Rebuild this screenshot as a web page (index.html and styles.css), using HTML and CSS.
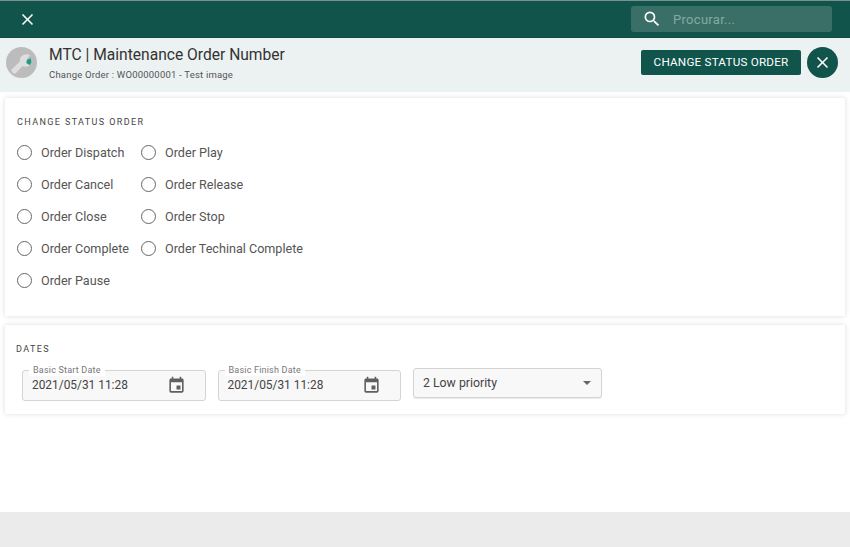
FILE: index.html
```html
<!DOCTYPE html>
<html lang="en">
<head>
  <meta charset="UTF-8">
  <meta name="viewport" content="width=device-width, initial-scale=1.0">
  <title>Maintenance Order Number</title>
  <link rel="stylesheet" href="styles.css">
</head>
<body>
  <div class="topbar">
    <button class="topbar-close" aria-label="Close">
      <svg viewBox="0 0 24 24" width="19" height="19"><path d="M19 6.41 17.59 5 12 10.59 6.41 5 5 6.41 10.59 12 5 17.59 6.41 19 12 13.41 17.59 19 19 17.59 13.41 12z"/></svg>
    </button>
    <div class="search">
      <svg viewBox="0 0 24 24" width="20" height="20"><path d="M15.5 14h-.79l-.28-.27A6.47 6.47 0 0 0 16 9.5 6.5 6.5 0 1 0 9.5 16c1.61 0 3.09-.59 4.23-1.57l.27.28v.79l5 4.99L20.49 19l-4.99-5zm-6 0C7.01 14 5 11.99 5 9.5S7.01 5 9.5 5 14 7.01 14 9.5 11.99 14 9.5 14z"/></svg>
      <span class="search-text">Procurar...</span>
    </div>
  </div>

  <div class="page-header">
    <div class="avatar">
      <svg viewBox="0 0 30 30" width="31" height="31">
        <path class="wrench" d="M5.5 21.5 13.5 14C13 9.5 16.5 6.5 21 7L23 8 20 12 19.5 15.5 23 18C20.5 19.5 18 19.5 16 18.5L9.5 25.5C7.5 26.5 4.5 24 5.5 21.5Z"/>
        <path class="wrench-tip" d="M20.3 12.5 24 11 24.5 15 23 17.5 19.8 15.5Z"/>
      </svg>
    </div>
    <div class="page-title">
      <h1>MTC | Maintenance Order Number</h1>
      <p>Change Order : WO00000001 - Test image</p>
    </div>
    <button class="btn-status">CHANGE STATUS ORDER</button>
    <button class="btn-close" aria-label="Close">
      <svg viewBox="0 0 24 24" width="19" height="19"><path d="M19 6.41 17.59 5 12 10.59 6.41 5 5 6.41 10.59 12 5 17.59 6.41 19 12 13.41 17.59 19 19 17.59 13.41 12z"/></svg>
    </button>
  </div>

  <div class="content">
    <section class="card card-status">
      <h2>CHANGE STATUS ORDER</h2>
      <div class="radio-columns">
        <div class="radio-col">
          <label class="radio"><span class="radio-dot"></span>Order Dispatch</label>
          <label class="radio"><span class="radio-dot"></span>Order Cancel</label>
          <label class="radio"><span class="radio-dot"></span>Order Close</label>
          <label class="radio"><span class="radio-dot"></span>Order Complete</label>
          <label class="radio"><span class="radio-dot"></span>Order Pause</label>
        </div>
        <div class="radio-col">
          <label class="radio"><span class="radio-dot"></span>Order Play</label>
          <label class="radio"><span class="radio-dot"></span>Order Release</label>
          <label class="radio"><span class="radio-dot"></span>Order Stop</label>
          <label class="radio"><span class="radio-dot"></span>Order Techinal Complete</label>
        </div>
      </div>
    </section>

    <section class="card card-dates">
      <h2>DATES</h2>
      <div class="date-row">
        <div class="field">
          <span class="field-label">Basic Start Date</span>
          <span class="field-value date-value">2021/05/31 11:28</span>
          <svg class="field-icon" viewBox="0 0 24 24" width="19" height="19"><path d="M17 12h-5v5h5v-5zM16 1v2H8V1H6v2H5c-1.11 0-1.99.9-1.99 2L3 19a2 2 0 0 0 2 2h14c1.1 0 2-.9 2-2V5c0-1.1-.9-2-2-2h-1V1h-2zm3 18H5V8h14v11z"/></svg>
        </div>
        <div class="field">
          <span class="field-label">Basic Finish Date</span>
          <span class="field-value date-value">2021/05/31 11:28</span>
          <svg class="field-icon" viewBox="0 0 24 24" width="19" height="19"><path d="M17 12h-5v5h5v-5zM16 1v2H8V1H6v2H5c-1.11 0-1.99.9-1.99 2L3 19a2 2 0 0 0 2 2h14c1.1 0 2-.9 2-2V5c0-1.1-.9-2-2-2h-1V1h-2zm3 18H5V8h14v11z"/></svg>
        </div>
        <div class="select">
          <span class="field-value select-value">2 Low priority</span>
          <span class="select-arrow"></span>
        </div>
      </div>
    </section>
  </div>

  <div class="footer"></div>
</body>
</html>
```

FILE: styles.css
```css
* {
  box-sizing: border-box;
}

body {
  font-family: Roboto, "Liberation Sans", Arial, sans-serif;
  background-color: #fff;
  color: #444;
  display: flex;
  flex-direction: column;
  height: 547px;
  margin: 0;
  overflow: hidden;
}

button {
  font-family: inherit;
  border: none;
  padding: 0;
  cursor: pointer;
}

/* Top bar */
.topbar {
  display: flex;
  justify-content: space-between;
  align-items: center;
  height: 38px;
  flex-shrink: 0;
  background-color: #11544c;
  border-top: 1px solid #7d8f8c;
  border-bottom: 1px solid #0f4a43;
  padding: 0 18px 0 18px;
}

.topbar-close {
  display: flex;
  background: transparent;
  fill: #fff;
}

.search {
  display: flex;
  align-items: center;
  width: 201px;
  height: 26px;
  background-color: #3a6f67;
  border-radius: 3px;
  padding-left: 11px;
  fill: #fff;
}

.search-text {
  margin-left: 11px;
  font-size: 13px;
  letter-spacing: 0.3px;
  color: #86a8a2;
}

/* Page header */
.page-header {
  display: flex;
  align-items: center;
  height: 54px;
  flex-shrink: 0;
  background-color: #ecf1f2;
  padding: 0 12px 6px 6px;
}

.avatar {
  display: flex;
  width: 31px;
  height: 31px;
  border-radius: 50%;
  background-color: #bcbcbc;
  overflow: hidden;
}

.wrench {
  fill: #dedede;
}

.wrench-tip {
  fill: #12a183;
}

.page-title {
  flex-grow: 1;
  margin: 2px 0 0 12px;
}

.page-title h1 {
  margin: 0;
  font-size: 15.6px;
  font-weight: 400;
  line-height: 20px;
  color: #333;
}

.page-title p {
  margin: 4px 0 0;
  font-size: 9.5px;
  line-height: 12px;
  letter-spacing: 0.2px;
  color: #555;
}

.btn-status {
  width: 160px;
  height: 25px;
  background-color: #11544c;
  color: #fff;
  border-radius: 2px;
  font-size: 11.7px;
  letter-spacing: 0.2px;
}

.btn-close {
  display: flex;
  justify-content: center;
  align-items: center;
  width: 31px;
  height: 31px;
  margin-left: 6px;
  border-radius: 50%;
  background-color: #11544c;
  fill: #fff;
}

/* Cards */
.content {
  flex-grow: 1;
  display: flex;
  flex-direction: column;
  gap: 9px;
  padding: 6px 5px 0;
}

.card {
  background-color: #fff;
  box-shadow: 0 0 5px rgba(0, 0, 0, 0.14);
}

.card h2 {
  margin: 0;
  font-size: 9px;
  font-weight: 400;
  line-height: 12px;
  letter-spacing: 1.4px;
  color: #444;
}

.card-status {
  height: 218px;
  padding: 18px 12px 0;
}

.radio-columns {
  display: flex;
  gap: 12px;
  margin-top: 8px;
}

.radio {
  display: flex;
  align-items: center;
  height: 32px;
  font-size: 12.6px;
  color: #555;
}

.radio-dot {
  width: 15px;
  height: 15px;
  margin-right: 9px;
  border: 1.5px solid #666;
  border-radius: 50%;
}

.card-dates {
  height: 89px;
  padding: 18px 11px 0;
}

.date-row {
  display: flex;
  align-items: flex-start;
  gap: 12px;
  margin-top: 13px;
  padding-left: 6px;
}

.field {
  position: relative;
  display: flex;
  justify-content: space-between;
  align-items: center;
  width: 183.5px;
  height: 31px;
  margin-top: 1.5px;
  padding: 0 19px 0 9px;
  background-color: #f8f8f8;
  border: 1px solid #d4d4d4;
  border-radius: 3px;
}

.field-label {
  position: absolute;
  top: -6px;
  left: 6px;
  padding: 0 4px;
  background-color: #fff;
  font-size: 9px;
  line-height: 11px;
  letter-spacing: 0.2px;
  color: #777;
}

.field-value {
  font-size: 12.5px;
  color: #444;
}

.date-value {
  font-size: 11.9px;
}

.select-value {
  font-size: 12.3px;
  margin-bottom: 1px;
}

.field-icon {
  fill: #5f5f5f;
}

.select {
  display: flex;
  justify-content: space-between;
  align-items: center;
  width: 189px;
  height: 30px;
  padding: 0 10px 0 9px;
  background-color: #f8f8f8;
  border: 1px solid #d4d4d4;
  border-radius: 3px;
  box-shadow: 0 1px 1px rgba(0, 0, 0, 0.08);
}

.select-arrow {
  width: 0;
  height: 0;
  border-left: 4.5px solid transparent;
  border-right: 4.5px solid transparent;
  border-top: 4.5px solid #666;
}

.footer {
  height: 35px;
  flex-shrink: 0;
  background-color: #ebebeb;
}
```
